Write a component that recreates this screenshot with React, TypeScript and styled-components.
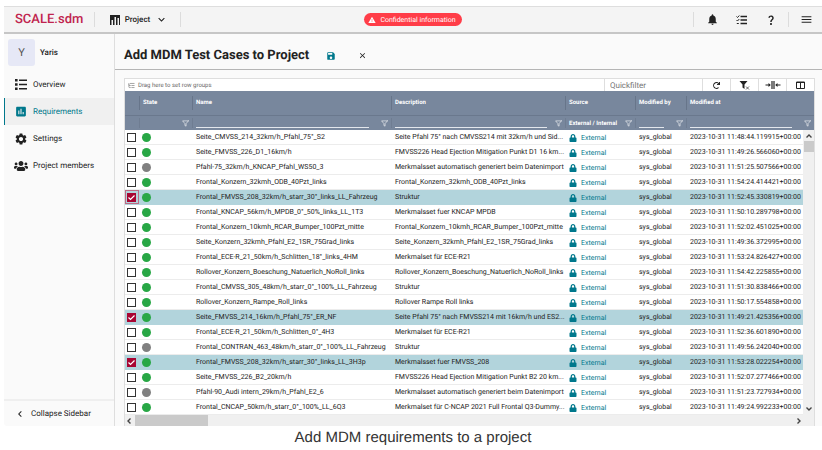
import React, { useState } from "react";
import styled, { createGlobalStyle } from "styled-components";
import {
  MdNotifications,
  MdQuestionMark,
  MdMenu,
  MdWarning,
  MdSave,
  MdClose,
  MdInsertChart,
  MdSettings,
  MdExpandMore,
  MdChevronLeft,
} from "react-icons/md";
import { FaUsers, FaLock, FaRedo } from "react-icons/fa";
import { ListTree } from "lucide-react";
import { FiFilter } from "react-icons/fi";

const GlobalStyle = createGlobalStyle`
  * { box-sizing: border-box; }
  body {
    margin: 0;
    background: #fff;
    font-family: Roboto, "Liberation Sans", sans-serif;
    color: #222;
    text-rendering: geometricPrecision;
  }
  button, input { font: inherit; color: inherit; text-rendering: inherit; }
`;

const Figure = styled.figure`
  margin: 0;
  padding: 6px 0 0 4px;
`;

const Caption = styled.figcaption`
  padding: 2px 0;
  text-align: center;
  font-family: "Liberation Sans", Arial, sans-serif;
  font-size: 15px;
  line-height: 20px;
  color: #333;
`;

const Shell = styled.div`
  background: #fafafa;
  border-radius: 0 0 0 3px;
  overflow: hidden;
`;

const TopBar = styled.header`
  display: flex;
  align-items: center;
  height: 28px;
  background: #f4f4f4;
  border-top: 1px solid #dedede;
  border-bottom: 2px solid #c6c6c6;
`;

const Logo = styled.a`
  width: 90px;
  padding-left: 11px;
  font-size: 13px;
  font-weight: 500;
  color: #c0244e;
  text-decoration: none;
`;

const Rule = styled.span`
  width: 1px;
  height: 15px;
  background: #dcdcdc;
`;

const Plain = styled.button`
  display: inline-flex;
  align-items: center;
  justify-content: center;
  padding: 0;
  border: 0;
  background: none;
`;

const ProjectMenu = styled(Plain)`
  gap: 5px;
  width: 85px;
  padding-left: 3px;
  font-size: 8px;
  font-weight: 500;
`;

const AlertSlot = styled.div`
  flex: 1;
  display: flex;
  justify-content: center;
  padding-right: 48px;
`;

const Alert = styled.span`
  display: flex;
  align-items: center;
  gap: 4px;
  height: 13px;
  padding: 0 6px 0 4px;
  border-radius: 7px;
  background: #ff3d48;
  color: #fff;
  font-size: 7px;
`;

const TopActions = styled.nav`
  display: flex;
  align-items: center;
  padding: 0 1px 0 4px;
  ${Rule} { margin: 0 3px; }
`;

const TopButton = styled(Plain)`
  width: 29px;
  height: 20px;
`;

const Body = styled.div`
  display: grid;
  grid-template-columns: 111px minmax(0, 1fr);
`;

const Sidebar = styled.aside`
  display: flex;
  flex-direction: column;
  border-right: 1px solid #dedede;
  font-size: 8px;
`;

const Vehicle = styled.div`
  display: flex;
  align-items: center;
  gap: 5px;
  padding: 5px 4px 5px;
  font-weight: 500;
`;

const Avatar = styled.span`
  width: 27px;
  line-height: 27px;
  border-radius: 3px;
  background: #e6e8f6;
  color: #555;
  text-align: center;
  font-size: 11px;
  font-weight: 400;
`;

const NavItem = styled.a<{ $active?: boolean }>`
  display: flex;
  align-items: center;
  gap: 5px;
  height: 27px;
  padding-left: 9px;
  border-left: 1px solid ${(p) => (p.$active ? "#00788c" : "transparent")};
  background: ${(p) => (p.$active ? "#f0f0f0" : "transparent")};
  color: ${(p) => (p.$active ? "#00788c" : "#222")};
  text-decoration: none;
  svg { width: 14px; }
`;

const Collapse = styled(Plain)`
  justify-content: flex-start;
  gap: 5px;
  height: 27px;
  margin-top: auto;
  padding-left: 10px;
  border-top: 2px solid #efefef;
`;

const Main = styled.main`
  min-width: 0;
`;

const TitleBar = styled.div`
  display: flex;
  align-items: center;
  height: 36px;
  padding: 8px 9px 0;
  border-bottom: 1px solid #b5b5b5;
`;

const Title = styled.h1`
  margin: 0 17px 0 0;
  font-size: 13px;
  line-height: 20px;
  font-weight: 700;
`;

const SaveButton = styled(Plain)`
  margin-right: 22px;
  color: #00788c;
`;

const Panel = styled.section`
  margin: 8px 7px 0 9px;
  border: 1px solid #dedede;
  border-bottom: 0;
  background: #fff;
`;

const Tools = styled.div`
  display: flex;
  height: 12px;
`;

const GroupHint = styled.div`
  flex: 1;
  display: flex;
  align-items: center;
  gap: 3px;
  padding-left: 3px;
  font-size: 6px;
  color: #666;
`;

const QuickFilter = styled.input`
  width: 98px;
  padding: 0 5px;
  border: 0;
  border-left: 1px solid #dedede;
  background: none;
  font-size: 8px;
  outline: 0;
  &::placeholder { color: #757575; }
`;

const ToolButton = styled(Plain)`
  width: 28px;
  border-left: 1px solid #dedede;
`;

const Viewport = styled.div`
  display: grid;
  grid-template-columns: minmax(0, 1fr) 11px;
`;

const Table = styled.table`
  grid-area: 1 / 1 / 2 / 3;
  width: 100%;
  table-layout: fixed;
  border-collapse: separate;
  border-spacing: 0;
  font-size: 7px;
`;

const Col = styled.col<{ $w?: number }>`
  width: ${(p) => (p.$w ? p.$w + "px" : "auto")};
`;

const Head = styled.thead`
  background: #78879d;
  color: #fff;
  font-size: 6px;
`;

const HeadCell = styled.th`
  height: 25px;
  padding: 0;
  border-bottom: 1px solid #6a788d;
  text-align: left;
  font-weight: 700;
`;

const HeadLabel = styled.span`
  display: block;
  padding-left: 3px;
  border-left: 1px solid #67758a;
  line-height: 14px;
  min-height: 14px;
`;

const FilterCell = styled.td`
  height: 14px;
  padding: 0;
`;

const FilterBox = styled.div`
  display: flex;
  align-items: center;
  justify-content: flex-end;
  height: 10px;
  padding: 0 3px;
  border-left: 1px solid #6f7d92;
  font-weight: 700;
`;

const FilterInput = styled.input<{ $gap: number }>`
  flex: 1;
  min-width: 0;
  width: 0;
  height: 10px;
  margin-right: ${(p) => p.$gap}px;
  padding: 0;
  border: 0;
  border-bottom: 1px solid #e3e7ed;
  background: none;
  outline: 0;
`;

const FilterText = styled.span`
  flex: 1;
  white-space: nowrap;
`;

const Row = styled.tr<{ $on: boolean }>`
  background: ${(p) => (p.$on ? "#b2d4dc" : "#fff")};
`;

const Cell = styled.td`
  height: 15px;
  padding: 0 0 0 4px;
  border-bottom: 1px solid #ececec;
  line-height: 12px;
  white-space: nowrap;
  overflow: hidden;
  text-overflow: ellipsis;
  ${Row}[aria-selected="true"] & { border-bottom-color: #b2d4dc; }
`;

const CheckCell = styled(Cell)<{ $focus: boolean }>`
  padding: 0 0 0 2px;
  box-shadow: ${(p) => (p.$focus ? "inset 0 0 0 1px #bd6a84" : "none")};
`;

const StateCell = styled(Cell)`
  padding: 0 0 0 3px;
`;

const Check = styled.input`
  appearance: none;
  display: block;
  width: 9px;
  height: 9px;
  margin: 0;
  border: 1px solid #333;
  background: #fff;
  &:checked {
    border-color: #a80532;
    background: #a80532;
  }
`;

const CheckWrap = styled.label`
  display: grid;
  width: 9px;
  height: 9px;
  > * { grid-area: 1 / 1; }
  svg { pointer-events: none; }
`;

const Dot = styled.span<{ $ok: boolean }>`
  display: block;
  width: 9px;
  height: 9px;
  border-radius: 50%;
  background: ${(p) => (p.$ok ? "#28a745" : "#808080")};
`;

const Source = styled.span`
  display: flex;
  align-items: center;
  gap: 4px;
  padding-top: 1px;
  color: #00788c;
`;

const VScroll = styled.div`
  grid-area: 1 / 2;
  display: flex;
  flex-direction: column;
  align-items: center;
  margin-top: 39px;
  padding: 2px 0;
  background: #f0f0f0;
`;

const VThumb = styled.span`
  width: 10px;
  height: 11px;
  margin: 1px 0 auto;
  background: #cacaca;
`;

const HScroll = styled.div`
  display: flex;
  align-items: center;
  height: 11px;
  padding-right: 11px;
  background: #f0f0f0;
`;

const HThumb = styled.span`
  width: 73px;
  height: 11px;
  margin: 0 auto 0 2px;
  background: #cacaca;
`;

const ProjectIcon = () => (
  <svg width="10" height="10" viewBox="0 0 10 10">
    <path d="M0 0h10v10H9V3H7.500v7H6V2H4.500v8H3V5H1.500v5H0z" fill="#222" />
  </svg>
);

const TasksIcon = () => (
  <svg width="12" height="10" viewBox="0 0 12 10" fill="none" stroke="#222">
    <path strokeWidth="1.300" d="M4.500 1.500H11M4.500 5H11M4.500 8.500H11" />
    <path d="M0.500 1.500l1 1 1.800-2M0.500 5l1 1 1.800-2M0.800 8.500h2" />
  </svg>
);

const ListIcon = () => (
  <svg width="14" height="11" viewBox="0 0 14 11" fill="#222">
    <path d="M1 0h2.600v2.600H1zM1 4.200h2.600v2.600H1zM1 8.400h2.600V11H1zM5 0.500h8v1.600H5zM5 4.700h8v1.600H5zM5 8.900h8v1.600H5z" />
  </svg>
);

const Arrow = ({ d }: { d: string }) => (
  <svg width="8" height="8" viewBox="0 0 8 8" fill="none" stroke="#444" strokeWidth="1.400">
    <path d={d} />
  </svg>
);

const FitIcon = () => (
  <svg width="16" height="8" viewBox="0 0 16 8" fill="none" stroke="#222">
    <path d="M0.500 4H5M11 4h4.500" />
    <path d="M3.500 2L5.800 4L3.500 6zM12.500 2L10.200 4L12.500 6z" fill="#222" stroke="none" />
    <path d="M7 0v8M9 0v8" strokeWidth="1.200" />
  </svg>
);

const ColumnsIcon = () => (
  <svg width="9" height="8" viewBox="0 0 9 8" fill="none" stroke="#222">
    <path d="M0.500 1h8v6.500h-8zM0.500 1.500h8M4.500 1v6.500" />
  </svg>
);

const ClearFilterIcon = () => (
  <svg width="11" height="10" viewBox="0 0 11 10">
    <path d="M0.500 1h8L5.500 4.500V9L3.500 7.500v-3z" fill="#222" />
    <path d="M7 6.500l3 3M10 6.500l-3 3" stroke="#444" strokeWidth="0.800" />
  </svg>
);

const Tick = () => (
  <svg width="9" height="9" viewBox="0 0 9 9" fill="none" stroke="#fff" strokeWidth="1.200">
    <path d="M1.500 4.500l2 2 4-4" />
  </svg>
);

type Item = [name: string, description: string, time: string, ok?: boolean];

const items: Item[] = [
  ["Seite_CMVSS_214_32km/h_Pfahl_75°_S2", "Seite Pfahl 75° nach CMVSS214 mit 32km/h und Sid...", "11:48:44.119915"],
  ["Seite_FMVSS_226_D1_16km/h", "FMVSS226 Head Ejection Mitigation Punkt D1 16 km...", "11:49:26.566060"],
  ["Pfahl-75_32km/h_KNCAP_Pfahl_WS50_3", "Merkmalsset automatisch generiert beim Datenimport", "11:51:25.507566", false],
  ["Frontal_Konzern_32kmh_ODB_40Pzt_links", "Frontal_Konzern_32kmh_ODB_40Pzt_links", "11:54:24.414421"],
  ["Frontal_FMVSS_208_32km/h_starr_30°_links_LL_Fahrzeug", "Struktur", "11:52:45.330819"],
  ["Frontal_KNCAP_56km/h_MPDB_0°_50%_links_LL_1T3", "Merkmalsset fuer KNCAP MPDB", "11:50:10.289798"],
  ["Frontal_Konzern_10kmh_RCAR_Bumper_100Pzt_mitte", "Frontal_Konzern_10kmh_RCAR_Bumper_100Pzt_mitte", "11:52:02.451025"],
  ["Seite_Konzern_32kmh_Pfahl_E2_1SR_75Grad_links", "Seite_Konzern_32kmh_Pfahl_E2_1SR_75Grad_links", "11:49:36.372995"],
  ["Frontal_ECE-R_21_50km/h_Schlitten_18°_links_4HM", "Merkmalset für ECE-R21", "11:53:24.826427"],
  ["Rollover_Konzern_Boeschung_Natuerlich_NoRoll_links", "Rollover_Konzern_Boeschung_Natuerlich_NoRoll_links", "11:54:42.225855"],
  ["Frontal_CMVSS_305_48km/h_starr_0°_100%_LL_Fahrzeug", "Struktur", "11:51:30.838466"],
  ["Rollover_Konzern_Rampe_Roll_links", "Rollover Rampe Roll links", "11:50:17.554858"],
  ["Seite_FMVSS_214_16km/h_Pfahl_75°_ER_NF", "Seite Pfahl 75° nach FMVSS214 mit 16km/h und ES2...", "11:49:21.425356"],
  ["Frontal_ECE-R_21_50km/h_Schlitten_0°_4H3", "Merkmalset für ECE-R21", "11:52:36.601890"],
  ["Frontal_CONTRAN_463_48km/h_starr_0°_100%_LL_Fahrzeug", "Struktur", "11:49:56.242040", false],
  ["Frontal_FMVSS_208_32km/h_starr_30°_links_LL_3H3p", "Merkmalsset fuer FMVSS_208", "11:53:28.022254"],
  ["Seite_FMVSS_226_B2_20km/h", "FMVSS226 Head Ejection Mitigation Punkt B2 20 km...", "11:52:07.277466"],
  ["Pfahl-90_Audi intern_29km/h_Pfahl_E2_6", "Merkmalsset automatisch generiert beim Datenimport", "11:51:23.727934", false],
  ["Frontal_CNCAP_50km/h_starr_0°_100%_LL_6Q3", "Merkmalset für C-NCAP 2021 Full Frontal Q3-Dummy...", "11:49:24.992233"],
];

const columns = ["", "State", "Name", "Description", "Source", "Modified by", "Modified at"];

export default function App() {
  const [selected, setSelected] = useState<number[]>([4, 12, 15]);
  const toggle = (i: number) =>
    setSelected((s) => (s.includes(i) ? s.filter((x) => x !== i) : [...s, i]));

  return (
    <>
      <GlobalStyle />
      <Figure>
        <Shell>
          <TopBar>
            <Logo href="#">SCALE.sdm</Logo>
            <Rule />
            <ProjectMenu>
              <ProjectIcon />
              Project
              <MdExpandMore size={13} />
            </ProjectMenu>
            <Rule />
            <AlertSlot>
              <Alert>
                <MdWarning size={8} />
                Confidential information
              </Alert>
            </AlertSlot>
            <Rule />
            <TopActions>
              <TopButton aria-label="Notifications"><MdNotifications size={13} /></TopButton>
              <TopButton aria-label="Tasks"><TasksIcon /></TopButton>
              <TopButton aria-label="Help"><MdQuestionMark size={12} /></TopButton>
              <Rule />
              <TopButton aria-label="Menu"><MdMenu size={13} /></TopButton>
            </TopActions>
          </TopBar>
          <Body>
            <Sidebar>
              <Vehicle>
                <Avatar>Y</Avatar>
                Yaris
              </Vehicle>
              <NavItem href="#"><ListIcon />Overview</NavItem>
              <NavItem href="#" $active><MdInsertChart size={13} />Requirements</NavItem>
              <NavItem href="#"><MdSettings size={14} />Settings</NavItem>
              <NavItem href="#"><FaUsers size={14} />Project members</NavItem>
              <Collapse>
                <MdChevronLeft size={12} />
                Collapse Sidebar
              </Collapse>
            </Sidebar>
            <Main>
              <TitleBar>
                <Title>Add MDM Test Cases to Project</Title>
                <SaveButton aria-label="Save"><MdSave size={10} /></SaveButton>
                <Plain aria-label="Close"><MdClose size={9} /></Plain>
              </TitleBar>
              <Panel>
                <Tools>
                  <GroupHint>
                    <ListTree size={7} />
                    Drag here to set row groups
                  </GroupHint>
                  <QuickFilter placeholder="Quickfilter" aria-label="Quickfilter" />
                  <ToolButton aria-label="Refresh"><FaRedo size={7} /></ToolButton>
                  <ToolButton aria-label="Clear filters"><ClearFilterIcon /></ToolButton>
                  <ToolButton aria-label="Fit columns"><FitIcon /></ToolButton>
                  <ToolButton aria-label="Choose columns"><ColumnsIcon /></ToolButton>
                </Tools>
                <Viewport>
                  <Table>
                    <colgroup>
                      <Col $w={14} />
                      <Col $w={53} />
                      <Col $w={199} />
                      <Col />
                      <Col $w={70} />
                      <Col $w={51} />
                      <Col $w={128} />
                    </colgroup>
                    <Head>
                      <tr>
                        {columns.map((c, i) => (
                          <HeadCell key={i} scope="col">{c && <HeadLabel>{c}</HeadLabel>}</HeadCell>
                        ))}
                      </tr>
                      <tr>
                        {columns.map((c, i) => (
                          <FilterCell key={i}>
                            {c && (
                              <FilterBox>
                                {c === "Source" && <FilterText>External / Internal</FilterText>}
                                {i !== 1 && i !== 4 && (
                                  <FilterInput $gap={i === 3 ? 8 : 12} aria-label={`Filter ${c}`} />
                                )}
                                <FiFilter size={7} />
                              </FilterBox>
                            )}
                          </FilterCell>
                        ))}
                      </tr>
                    </Head>
                    <tbody>
                      {items.map(([name, description, time, ok = true], i) => {
                        const on = selected.includes(i);
                        return (
                          <Row key={i} $on={on} aria-selected={on}>
                            <CheckCell $focus={i === 4}>
                              <CheckWrap>
                                <Check type="checkbox" aria-label={name} checked={on} onChange={() => toggle(i)} />
                                {on && <Tick />}
                              </CheckWrap>
                            </CheckCell>
                            <StateCell><Dot $ok={ok} /></StateCell>
                            <Cell>{name}</Cell>
                            <Cell>{description}</Cell>
                            <Cell><Source><FaLock size={8} />External</Source></Cell>
                            <Cell>sys_global</Cell>
                            <Cell>2023-10-31 {time}+00:00</Cell>
                          </Row>
                        );
                      })}
                    </tbody>
                  </Table>
                  <VScroll>
                    <Arrow d="M1.500 5.500L4 3l2.500 2.500" />
                    <VThumb />
                    <Arrow d="M1.500 2.500L4 5l2.500-2.500" />
                  </VScroll>
                </Viewport>
                <HScroll>
                  <Arrow d="M5.500 1.500L3 4l2.500 2.500" />
                  <HThumb />
                  <Arrow d="M2.500 1.500L5 4l-2.500 2.500" />
                </HScroll>
              </Panel>
            </Main>
          </Body>
        </Shell>
        <Caption>Add MDM requirements to a project</Caption>
      </Figure>
    </>
  );
}
